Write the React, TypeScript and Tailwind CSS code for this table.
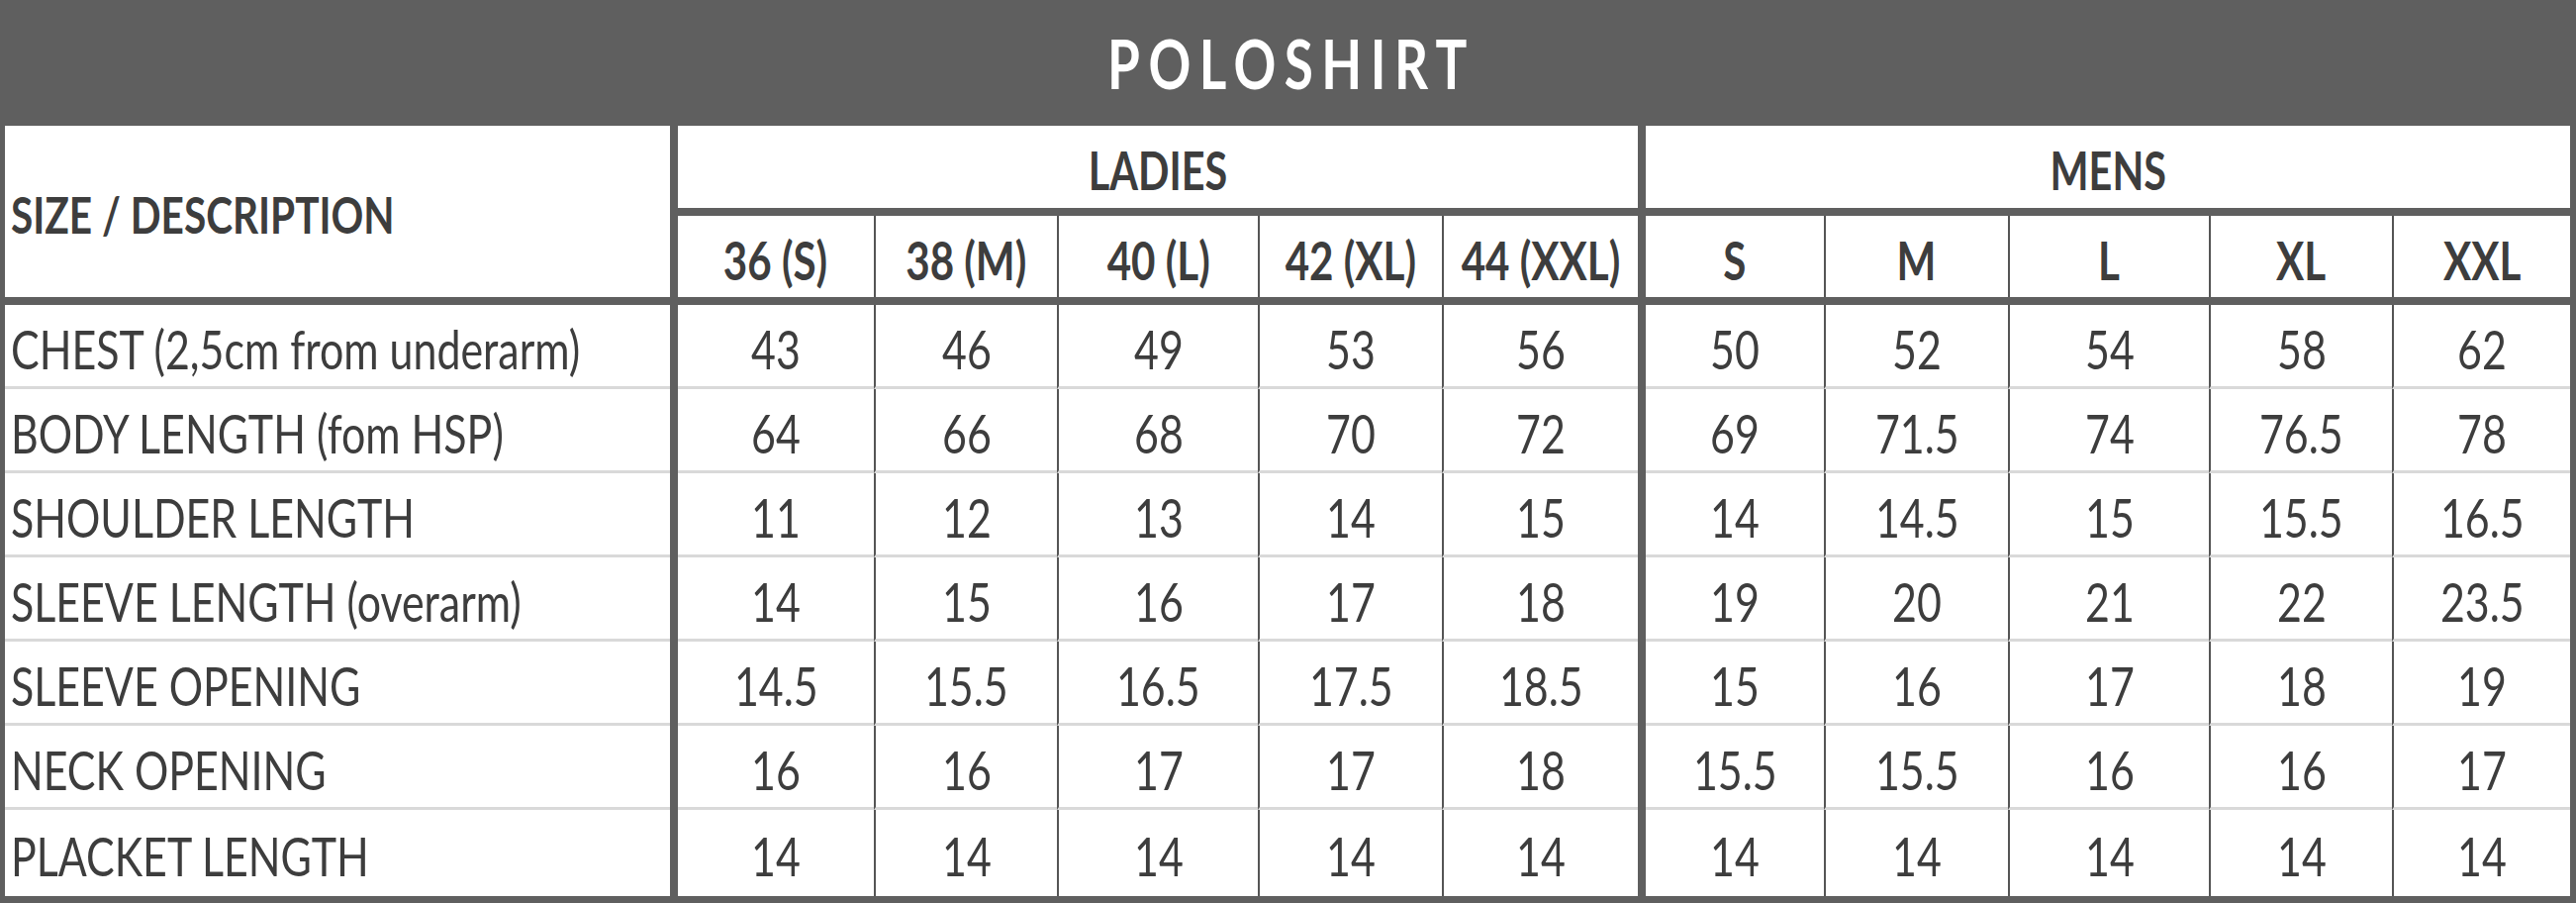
import React from "react";

const ladiesW = ["w-[198px]", "w-[185px]", "w-[203px]", "w-[186px]", "w-[198px]"];
const mensW = ["w-[180px]", "w-[186px]", "w-[203px]", "w-[185px]", "w-[180px]"];

const ladiesHead = ["36 (S)", "38 (M)", "40 (L)", "42 (XL)", "44 (XXL)"];
const mensHead = ["S", "M", "L", "XL", "XXL"];

const rows: { label: string; ladies: string[]; mens: string[] }[] = [
  { label: "CHEST (2,5cm from underarm)", ladies: ["43", "46", "49", "53", "56"], mens: ["50", "52", "54", "58", "62"] },
  { label: "BODY LENGTH (fom HSP)", ladies: ["64", "66", "68", "70", "72"], mens: ["69", "71.5", "74", "76.5", "78"] },
  { label: "SHOULDER LENGTH", ladies: ["11", "12", "13", "14", "15"], mens: ["14", "14.5", "15", "15.5", "16.5"] },
  { label: "SLEEVE LENGTH (overarm)", ladies: ["14", "15", "16", "17", "18"], mens: ["19", "20", "21", "22", "23.5"] },
  { label: "SLEEVE OPENING", ladies: ["14.5", "15.5", "16.5", "17.5", "18.5"], mens: ["15", "16", "17", "18", "19"] },
  { label: "NECK OPENING", ladies: ["16", "16", "17", "17", "18"], mens: ["15.5", "15.5", "16", "16", "17"] },
  { label: "PLACKET LENGTH", ladies: ["14", "14", "14", "14", "14"], mens: ["14", "14", "14", "14", "14"] },
];

function Sq({ children, left }: { children: React.ReactNode; left?: boolean }) {
  return (
    <span className={`inline-block whitespace-nowrap scale-x-[0.78] ${left ? "origin-left" : "origin-center"}`}>
      {children}
    </span>
  );
}

function DataRow({ r, last }: { r: (typeof rows)[number]; last: boolean }) {
  const sep = last ? "" : "border-b-[3px] border-b-[#d9d9d9]";
  return (
    <div className={`flex gap-[8px] ${last ? "h-[87px]" : "h-[85px]"}`}>
      <div className={`w-[672px] bg-white flex items-center pl-[6px] pt-[6px] ${sep}`}>
        <Sq left>{r.label}</Sq>
      </div>
      <div className="flex bg-white">
        {r.ladies.map((v, i) => (
          <div
            key={i}
            className={`${ladiesW[i]} flex items-center justify-center pt-[6px] ${sep} ${i > 0 ? "border-l-2 border-l-[#555555]" : ""}`}
          >
            <Sq>{v}</Sq>
          </div>
        ))}
      </div>
      <div className="flex bg-white">
        {r.mens.map((v, i) => (
          <div
            key={i}
            className={`${mensW[i]} flex items-center justify-center pt-[6px] ${sep} ${i > 0 ? "border-l-2 border-l-[#555555]" : ""}`}
          >
            <Sq>{v}</Sq>
          </div>
        ))}
      </div>
    </div>
  );
}

export default function App() {
  return (
    <div className="w-[2603px] h-[912px] bg-[#5f5f5f] pl-[5px] pr-[6px] pb-[7px] flex flex-col font-['Lato','Open_Sans',sans-serif] text-[#3d3d3d] leading-none overflow-hidden">
      <div className="h-[127px] flex items-center justify-center">
        <span className="inline-block scale-x-[0.78] text-[68px] font-bold text-white tracking-[0.16em] pl-[0.16em]">
          POLOSHIRT
        </span>
      </div>
      <div className="flex gap-[8px] h-[173px] font-bold">
        <div className="w-[672px] bg-white flex items-center pl-[6px] pt-[4px] text-[52px]">
          <Sq left>SIZE / DESCRIPTION</Sq>
        </div>
        <div className="w-[970px] flex flex-col gap-[8px]">
          <div className="h-[83px] bg-white flex items-center justify-center pt-[6px] text-[53px]">
            <Sq>LADIES</Sq>
          </div>
          <div className="h-[82px] bg-white flex text-[54px]">
            {ladiesHead.map((h, i) => (
              <div
                key={i}
                className={`${ladiesW[i]} flex items-center justify-center pt-[8px] ${i > 0 ? "border-l-2 border-l-[#555555]" : ""}`}
              >
                <Sq>{h}</Sq>
              </div>
            ))}
          </div>
        </div>
        <div className="w-[934px] flex flex-col gap-[8px]">
          <div className="h-[83px] bg-white flex items-center justify-center pt-[6px] text-[53px]">
            <Sq>MENS</Sq>
          </div>
          <div className="h-[82px] bg-white flex text-[54px]">
            {mensHead.map((h, i) => (
              <div
                key={i}
                className={`${mensW[i]} flex items-center justify-center pt-[8px] ${i > 0 ? "border-l-2 border-l-[#555555]" : ""}`}
              >
                <Sq>{h}</Sq>
              </div>
            ))}
          </div>
        </div>
      </div>
      <div className="h-[8px] shrink-0" />
      <div className="flex flex-col text-[55px]">
        {rows.map((r, i) => (
          <DataRow key={i} r={r} last={i === rows.length - 1} />
        ))}
      </div>
    </div>
  );
}
